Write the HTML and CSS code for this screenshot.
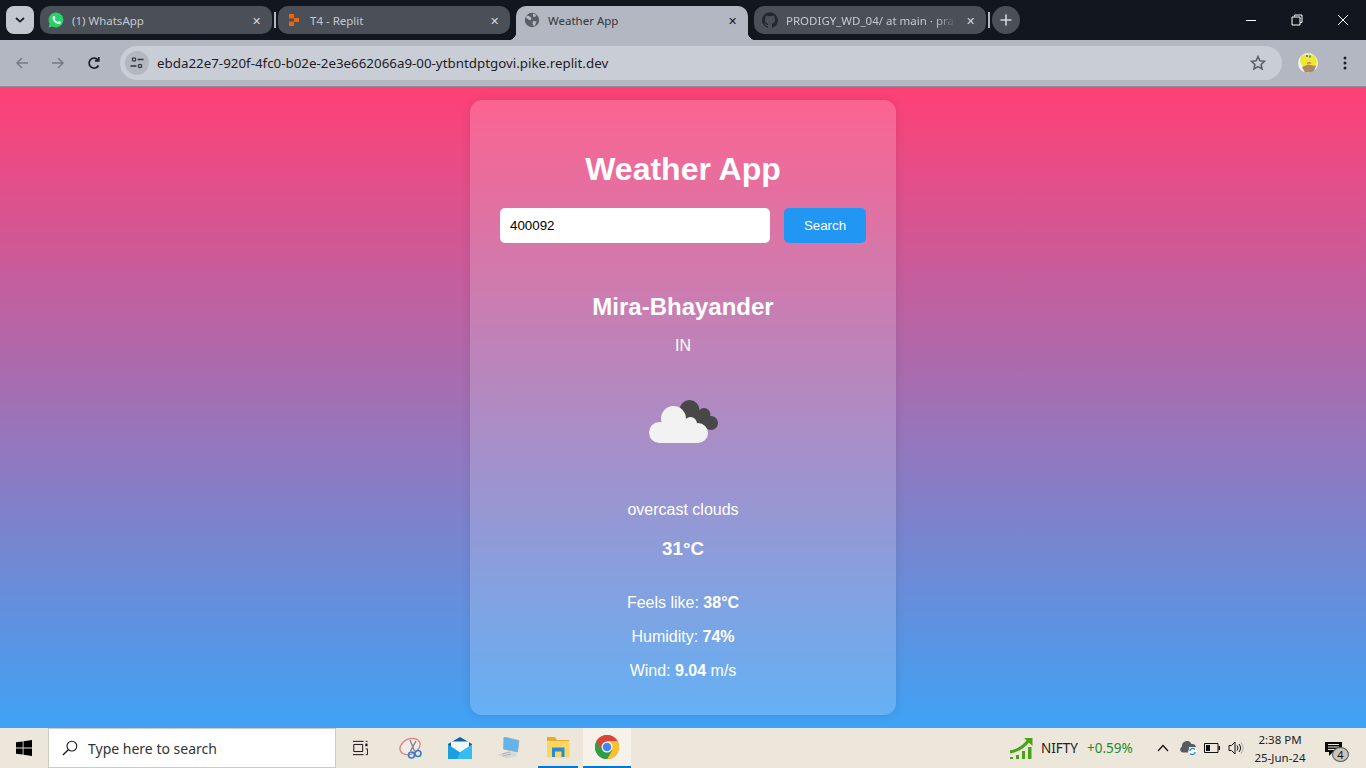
FILE: index.html
```html
<!DOCTYPE html>
<html lang="en">
<head>
  <meta charset="UTF-8">
  <meta name="viewport" content="width=device-width, initial-scale=1.0">
  <title>Weather App</title>
  <link rel="stylesheet" href="styles.css">
</head>
<body>
  <!-- browser tabs -->
  <div class="tabstrip">
    <div class="tab-menu">
      <svg width="10" height="6" viewBox="0 0 10 6"><path d="M1 1l4 3.6L9 1" fill="none" stroke="#1b1e25" stroke-width="1.8"/></svg>
    </div>
    <div class="tab">
      <svg class="favicon" width="16" height="16" viewBox="0 0 16 16"><path d="M8 .4a7.5 7.5 0 0 0-6.4 11.3L.5 15.6l4-1A7.5 7.5 0 1 0 8 .4z" fill="#25d366"/><path d="M5.6 3.9c-.9.5-1.4 1.600-1 2.900.7 2.400 2.900 4.500 5.300 5.200 1.300.3 2.400-.2 2.800-1.100.2-.5.200-.9.100-1l-1.900-.9-.9 1.100c-1.500-.5-2.700-1.700-3.300-3.200l.7-.9-.8-2z" fill="#fff"/></svg>
      <span class="tab-title">(1) WhatsApp</span>
      <span class="tab-close">✕</span>
    </div>
    <div class="tab-sep"></div>
    <div class="tab">
      <svg class="favicon" width="16" height="16" viewBox="0 0 16 16"><path d="M3 2h5v4.500H3zM8 6h5v4H8zM3 9.500h5V14H3z" fill="#f26207"/></svg>
      <span class="tab-title">T4 - Replit</span>
      <span class="tab-close">✕</span>
    </div>
    <div class="tab tab-active">
      <svg class="favicon" width="16" height="16" viewBox="0 0 16 16"><circle cx="8" cy="8" r="7.200" fill="#5a5e66"/><path d="M3 3.500l3 1 1.500 2-1 1.800-2-.5-2.700-2.500zM9 1.500l3.500 1.500-1.500 2-2-.5zM9 9l3.500.5-1.500 4-1.500.5-1-2.500z" fill="#b3b7c2"/></svg>
      <span class="tab-title">Weather App</span>
      <span class="tab-close">✕</span>
    </div>
    <div class="tab tab-last">
      <svg class="favicon" width="16" height="16" viewBox="0 0 16 16"><path d="M8 .2a8 8 0 0 0-2.500 15.600c.4.100.5-.2.500-.4v-1.400c-2.200.5-2.700-1-2.700-1-.4-.9-.9-1.200-.9-1.200-.7-.5.100-.5.100-.5.800.1 1.200.8 1.200.8.700 1.200 1.900.9 2.300.7.100-.5.300-.9.500-1.100-1.800-.2-3.600-.9-3.600-4 0-.9.300-1.600.8-2.100-.1-.2-.4-1 .1-2.100 0 0 .7-.2 2.200.8a7.600 7.600 0 0 1 4 0c1.500-1 2.200-.8 2.200-.8.400 1.100.200 1.900.100 2.100.5.600.8 1.300.8 2.100 0 3.100-1.900 3.700-3.700 3.900.3.300.6.800.6 1.500v2.200c0 .2.100.5.600.4A8 8 0 0 0 8 .2z" fill="#24272e"/></svg>
      <span class="tab-title tab-title-fade">PRODIGY_WD_04/ at main · pra</span>
      <span class="tab-close">✕</span>
    </div>
    <div class="tab-sep tab-sep-last"></div>
    <div class="tab-new">
      <svg width="12" height="12" viewBox="0 0 12 12"><path d="M6 .5v11M.5 6h11" stroke="#d3d6dc" stroke-width="1.600"/></svg>
    </div>
    <div class="win-controls">
      <svg width="12" height="12" viewBox="0 0 12 12"><path d="M1 6.500h10" stroke="#fff"/></svg>
      <svg width="12" height="12" viewBox="0 0 12 12"><path d="M3.500 2.500V1h7.500v7.500H9M1 3h8v8H1z" fill="none" stroke="#fff"/></svg>
      <svg width="12" height="12" viewBox="0 0 12 12"><path d="M1 1l10 10M11 1L1 11" stroke="#fff"/></svg>
    </div>
  </div>

  <!-- address bar -->
  <div class="toolbar">
    <svg class="nav-icon" width="14" height="14" viewBox="0 0 14 14"><path d="M13 7H2M7 2L2 7l5 5" fill="none" stroke="#777b84" stroke-width="1.500"/></svg>
    <svg class="nav-icon" width="14" height="14" viewBox="0 0 14 14"><path d="M1 7h11M7 2l5 5-5 5" fill="none" stroke="#777b84" stroke-width="1.500"/></svg>
    <svg class="nav-icon" width="14" height="14" viewBox="0 0 14 14"><path d="M11.500 9.500A5 5 0 1 1 11 4M11.800 1v3.800H8" fill="none" stroke="#1e2025" stroke-width="1.700"/></svg>
    <div class="omnibox">
      <div class="site-info">
        <svg width="14" height="12" viewBox="0 0 14 12"><circle cx="4" cy="2.500" r="1.700" fill="none" stroke="#33363c" stroke-width="1.200"/><path d="M7.500 2.500h6M.5 9h6" stroke="#33363c" stroke-width="1.400"/><circle cx="10" cy="9" r="1.700" fill="none" stroke="#33363c" stroke-width="1.200"/></svg>
      </div>
      <span class="url">ebda22e7-920f-4fc0-b02e-2e3e662066a9-00-ytbntdptgovi.pike.replit.dev</span>
      <svg class="star" width="16" height="16" viewBox="0 0 16 16"><path d="M8 1.500l1.900 4.300 4.600.5-3.400 3.100 1 4.600L8 11.700l-4.100 2.300 1-4.600L1.500 6.300l4.600-.5z" fill="none" stroke="#5a5d64" stroke-width="1.500"/></svg>
    </div>
    <svg class="avatar" width="20" height="20" viewBox="0 0 20 20"><circle cx="10" cy="10" r="10" fill="#f3f1e6"/><path d="M3 3.500C6 .5 14 0 17.500 4c1.500 3 1.500 7 .5 10l-14-1C2 10 2 6 3 3.500z" fill="#ecea2a"/><path d="M4 14l6-2.500 8 1.500-2 5-3 1.500H7z" fill="#a98a66"/><path d="M9 9.500h4v1H9z" fill="#d8369c"/><path d="M8 2h2v2H8zM11 2.500h2v2h-2z" fill="#6f79b8"/></svg>
    <svg class="kebab" width="4" height="14" viewBox="0 0 4 14"><circle cx="2" cy="2" r="1.500" fill="#1e2025"/><circle cx="2" cy="7" r="1.500" fill="#1e2025"/><circle cx="2" cy="12" r="1.500" fill="#1e2025"/></svg>
  </div>

  <!-- weather page -->
  <main class="page">
    <section class="card">
      <h1>Weather App</h1>
      <form class="search-form">
        <input type="text" class="city-input" value="400092">
        <button type="button" class="search-btn">Search</button>
      </form>
      <h2 class="city">Mira-Bhayander</h2>
      <p class="country">IN</p>
      <svg class="weather-icon" width="100" height="100" viewBox="0 0 100 100">
        <g fill="#484848">
          <circle cx="56.500" cy="38" r="10"/>
          <circle cx="71" cy="42.500" r="6.500"/>
          <circle cx="78" cy="51" r="7"/>
          <path d="M50 40h24v18H50z"/>
        </g>
        <g fill="#f2f2f2">
          <circle cx="40.500" cy="46.500" r="12.500"/>
          <circle cx="26.500" cy="60.500" r="10.500"/>
          <circle cx="65" cy="61" r="10"/>
          <circle cx="57.500" cy="51.500" r="6.500"/>
          <path d="M26 52h38v19H26z"/>
        </g>
      </svg>
      <p class="desc">overcast clouds</p>
      <p class="temp">31°C</p>
      <p class="detail detail-first">Feels like: <b>38°C</b></p>
      <p class="detail">Humidity: <b>74%</b></p>
      <p class="detail">Wind: <b>9.04</b> m/s</p>
    </section>
  </main>

  <!-- windows taskbar -->
  <footer class="taskbar">
    <div class="start">
      <svg width="16" height="16" viewBox="0 0 16 16"><path d="M0 2.300l6.700-.9v6.200H0zM7.500 1.300L16 0v7.600H7.500zM0 8.400h6.700v6.200L0 13.700zM7.500 8.400H16V16l-8.500-1.200z" fill="#000"/></svg>
    </div>
    <div class="task-search">
      <svg width="16" height="16" viewBox="0 0 17 17"><circle cx="10.500" cy="6.500" r="5.200" fill="none" stroke="#1a1a1a" stroke-width="1.200"/><path d="M6.700 10.300L1 16" stroke="#1a1a1a" stroke-width="1.400"/></svg>
      <span>Type here to search</span>
    </div>
    <div class="task-btn task-view">
      <svg width="16" height="16" viewBox="0 0 18 16"><path d="M1 .5h12M1 15.500h12M2 4h10v8H2z" fill="none" stroke="#111" stroke-width="1.100"/><path d="M15 3h2.500v3H15z" fill="#111"/><path d="M15.500 .5h2M15.500 9h2v6.500h-2" fill="none" stroke="#111"/></svg>
    </div>
    <div class="task-apps">
      <div class="task-btn">
        <svg width="24" height="24" viewBox="0 0 24 24"><ellipse cx="11" cy="10.500" rx="10.500" ry="7.500" transform="rotate(-25 11 10.500)" fill="#f3ece6" stroke="#e77f7c" stroke-width="1.300"/><path d="M11 4l4.500 11M17 5l-5.500 10" stroke="#77797d" stroke-width="1.200"/><circle cx="12.500" cy="19" r="3" fill="none" stroke="#2e7fd6" stroke-width="1.600"/><circle cx="19" cy="17.500" r="3" fill="none" stroke="#2e7fd6" stroke-width="1.600"/></svg>
      </div>
      <div class="task-btn">
        <svg width="24" height="22" viewBox="0 0 24 22"><path d="M0 7l12-7 12 7v15H0z" fill="#0b62ad"/><path d="M3 4.500h18V11l-9 5-9-5z" fill="#eef7fc"/><path d="M0 7.500l12 8 12-8V22H0z" fill="#1a9fe0"/><path d="M24 7.500V22H9l3-6.500z" fill="#35bdf0"/></svg>
      </div>
      <div class="task-btn">
        <svg width="24" height="22" viewBox="0 0 24 22"><path d="M7 0l15 3.500-1.500 11.500L6.500 12z" fill="#63b4ea" stroke="#9aa5ae" stroke-width=".7"/><path d="M11 14.500l8 1.500 1 3-10.500 2.500-9-3.500z" fill="#d6d8d9"/><path d="M5 17l8-2M6 19l8-2" stroke="#b0b3b5"/></svg>
      </div>
      <div class="task-btn task-open task-folder">
        <svg width="24" height="22" viewBox="0 0 24 22"><path d="M1 1h8l2 3h12v6H1z" fill="#eda92a"/><path d="M1 5h22.500v16.500H1z" fill="#fdd663"/><path d="M6 11.500h12.500V21h-3v-5.500H9V21H6z" fill="#2b8bd2"/></svg>
      </div>
      <div class="task-btn task-open task-current">
        <svg width="24" height="24" viewBox="0 0 24 24"><circle cx="12" cy="12" r="12" fill="#db4437"/><path d="M12 24A12 12 0 0 0 22.400 6H12l5.200 9z" fill="#fbc02d"/><path d="M1.600 6A12 12 0 0 0 12 24l5.200-9H6.800z" fill="#2e9e48"/><path d="M12 6h10.400a12 12 0 0 0-20.800 0l5.200 9A6 6 0 0 1 12 6z" fill="#db4437"/><circle cx="12" cy="12" r="5.500" fill="#fff"/><circle cx="12" cy="12" r="4.300" fill="#4285f4"/></svg>
      </div>
    </div>
    <div class="tray">
      <div class="stock">
        <svg width="24" height="23" viewBox="0 0 24 23"><path d="M1 15C7 14 14 11 20 3" fill="none" stroke="#4aa317" stroke-width="3"/><path d="M15 1h8.500v8z" fill="#4aa317"/><path d="M1 20h3v2H1zM7 18h3v4H7zM13 14h3v8h-3zM19 10h3.500v12H19z" fill="#4aa317"/></svg>
        <span class="stock-name">NIFTY</span>
        <span class="stock-change">+0.59%</span>
      </div>
      <svg class="tray-chevron" width="12" height="8" viewBox="0 0 12 8"><path d="M1 7l5-5.500L11 7" fill="none" stroke="#111" stroke-width="1.200"/></svg>
      <svg class="tray-cloud" width="18" height="15" viewBox="0 0 18 15"><path d="M2.500 11.500A3 3 0 0 1 2 5.800 5 5 0 0 1 11.500 3 4 4 0 0 1 16 6H9v5.500z" fill="#575b60"/><circle cx="12.500" cy="10.500" r="4.300" fill="#fff"/><path d="M9.800 10a2.800 2.800 0 0 1 5-1.500M15.200 11a2.800 2.800 0 0 1-5 1.500" fill="none" stroke="#1685dc" stroke-width="1.300"/></svg>
      <svg class="tray-battery" width="16" height="10" viewBox="0 0 16 10"><path d="M.5 .5h13.500v9H.5z" fill="none" stroke="#111"/><path d="M2 2h4v6H2z" fill="#111"/><path d="M14.500 3H16v4h-1.500z" fill="#111"/></svg>
      <svg class="tray-volume" width="16" height="14" viewBox="0 0 16 14"><path d="M1 4.500h2.500L7 1v12L3.500 9.500H1z" fill="none" stroke="#111"/><path d="M9 4.500a4 4 0 0 1 0 5M11 3a6.500 6.500 0 0 1 0 8" fill="none" stroke="#111"/><path d="M13 1.500a9 9 0 0 1 0 11" fill="none" stroke="#aaa"/></svg>
      <div class="clock">
        <span>2:38 PM</span>
        <span>25-Jun-24</span>
      </div>
      <div class="notify">
        <svg width="17" height="14" viewBox="0 0 17 14"><path d="M0 0h17v10H8l-4 4v-4H0z" fill="#0c0c0c"/><path d="M3 2.500h11M3 5h11M3 7.500h7" stroke="#ede6da"/></svg>
        <span class="notify-badge">4</span>
      </div>
    </div>
  </footer>
</body>
</html>
```

FILE: styles.css
```css
* {
  box-sizing: border-box;
}

html, body {
  margin: 0;
  height: 768px;
  overflow: hidden;
}

body {
  display: flex;
  flex-direction: column;
  font-family: "Liberation Sans", Arial, sans-serif;
}

/* tab strip */
.tabstrip {
  display: flex;
  align-items: flex-start;
  height: 40px;
  padding: 6px 0 0 6px;
  background-color: #12161f;
  font-family: "Noto Sans", sans-serif;
  font-size: 11.5px;
}

.tab-menu {
  display: flex;
  align-items: center;
  justify-content: center;
  width: 28px;
  height: 28px;
  margin-right: 6px;
  border-radius: 8px;
  background-color: #c3c7d0;
}

.tab {
  display: flex;
  align-items: center;
  width: 232px;
  height: 28px;
  padding: 0 11px 0 8px;
  border-radius: 10px;
  background-color: #4b4f58;
  color: #c6c8cd;
}

.favicon {
  flex: none;
  margin-right: 8px;
}

.tab-title {
  flex: 1;
  overflow: hidden;
  white-space: nowrap;
}

.tab-title-fade {
  -webkit-mask-image: linear-gradient(to right, #000 88%, transparent);
  mask-image: linear-gradient(to right, #000 88%, transparent);
}

.tab-close {
  margin-left: 10px;
  font-size: 11px;
  color: #d3d6dc;
}

.tab-sep {
  width: 2px;
  height: 16px;
  margin: 6px 2px 0;
  background-color: #b3b7c2;
}

.tab-active {
  position: relative;
  height: 34px;
  margin: 0 6px;
  padding-bottom: 6px;
  border-radius: 10px 10px 0 0;
  background-color: #b3b7c2;
  color: #33363c;
}

.tab-active .tab-close {
  color: #17191e;
}

.tab-active::before,
.tab-active::after {
  content: "";
  position: absolute;
  bottom: 0;
  width: 8px;
  height: 8px;
}

.tab-active::before {
  left: -8px;
  background: radial-gradient(circle at 0 0, transparent 8px, #b3b7c2 8.5px);
}

.tab-active::after {
  right: -8px;
  background: radial-gradient(circle at 100% 0, transparent 8px, #b3b7c2 8.5px);
}

.tab-last {
  width: 232px;
}

.tab-sep-last {
  margin: 6px 2px 0;
}

.tab-new {
  display: flex;
  align-items: center;
  justify-content: center;
  width: 28px;
  height: 28px;
  border-radius: 50%;
  background-color: #4b4f58;
}

.win-controls {
  display: flex;
  gap: 34px;
  margin-left: auto;
  padding: 8px 17px 0 0;
}

/* address bar */
.toolbar {
  display: flex;
  align-items: center;
  height: 47px;
  padding: 0 0 1px 15px;
  border-bottom: 1px solid #8f9299;
  background-color: #b3b7c2;
}

.nav-icon {
  flex: none;
  margin-right: 22px;
}

.omnibox {
  display: flex;
  align-items: center;
  width: 1162px;
  height: 34px;
  margin-left: -3px;
  padding: 0 16px 0 5px;
  border-radius: 17px;
  background-color: #c9ced6;
  font-family: "Noto Sans", sans-serif;
}

.site-info {
  display: flex;
  align-items: center;
  justify-content: center;
  width: 24px;
  height: 24px;
  margin-right: 8px;
  border-radius: 50%;
  background-color: #b3b7c2;
}

.url {
  flex: 1;
  font-size: 13.35px;
  color: #1e2025;
}

.avatar {
  flex: none;
  margin-left: 16px;
}

.kebab {
  flex: none;
  margin-left: 25px;
}

/* weather page */
.page {
  flex: 1;
  display: flex;
  align-items: center;
  justify-content: center;
  background: linear-gradient(to bottom, #ff4076, #3fa2f5);
}

.card {
  width: 426px;
  height: 615px;
  padding: 30px;
  border-radius: 12px;
  background-color: rgba(255, 255, 255, 0.18);
  box-shadow: 0 0 10px rgba(0, 0, 0, 0.1);
  color: #fff;
  text-align: center;
}

.card h1 {
  margin: 21px 0 20px;
  font-size: 32px;
  line-height: 37px;
}

.search-form {
  display: flex;
  gap: 14px;
  margin-bottom: 50px;
}

.city-input {
  flex: 1;
  height: 35px;
  padding: 0 10px;
  border: 0;
  border-radius: 5px;
  background-color: #fff;
  font-family: "Liberation Sans", Arial, sans-serif;
  font-size: 13.33px;
  color: #000;
}

.search-btn {
  width: 82px;
  height: 35px;
  padding: 0 0 1px;
  border: 0;
  border-radius: 5px;
  background-color: #2196f3;
  font-family: "Liberation Sans", Arial, sans-serif;
  font-size: 13.33px;
  color: #fff;
}

.city {
  margin: 0;
  font-size: 24px;
  line-height: 28px;
}

.country {
  margin: 16px 0 0;
  font-size: 16px;
  line-height: 18px;
}

.weather-icon {
  display: block;
  margin: 17px auto 0;
}

.desc {
  margin: 29px 0 0;
  font-size: 16px;
  line-height: 18px;
}

.temp {
  margin: 19px 0 0;
  font-size: 18.72px;
  font-weight: bold;
  line-height: 21px;
}

.detail {
  margin: 16px 0 0;
  font-size: 16px;
  line-height: 18px;
}

.detail-first {
  margin-top: 35px;
}

/* taskbar */
.taskbar {
  display: flex;
  align-items: stretch;
  height: 40px;
  background-color: #ede6da;
  font-family: "Noto Sans", sans-serif;
}

.start {
  display: flex;
  align-items: center;
  justify-content: center;
  width: 48px;
}

.task-search {
  display: flex;
  align-items: center;
  gap: 10px;
  width: 288px;
  padding-left: 13px;
  border: 1px solid #cfcbc4;
  background-color: #fff;
  font-size: 14px;
  color: #333;
}

.task-btn {
  display: flex;
  align-items: center;
  justify-content: center;
  width: 48px;
}

.task-view {
  margin-right: 3px;
}

.task-apps {
  display: flex;
  gap: 1px;
}

.task-open {
  border-bottom: 2px solid #0078d4;
}

.task-folder {
  width: 40px;
  margin: 0 4px;
}

.task-current {
  background-color: #f6f2ea;
}

.tray {
  display: flex;
  align-items: center;
  margin-left: auto;
  padding-right: 24px;
}

.stock {
  display: flex;
  align-items: center;
  width: 144px;
  font-size: 13.5px;
}

.stock-name {
  margin-left: 8px;
  color: #222;
}

.stock-change {
  margin-left: 9px;
  color: #1d8a33;
}

.tray-chevron {
  margin-left: 4px;
}

.tray-cloud {
  margin-left: 11px;
}

.tray-battery {
  margin-left: 6px;
}

.tray-volume {
  margin-left: 8px;
}

.clock {
  display: flex;
  flex-direction: column;
  align-items: center;
  gap: 3px;
  width: 62px;
  margin-left: 5px;
  font-size: 11.5px;
  line-height: 15px;
  color: #222;
}

.notify {
  position: relative;
  margin: -4px 0 0 14px;
  height: 14px;
}

.notify-badge {
  position: absolute;
  top: 8px;
  left: 7px;
  width: 17px;
  height: 15px;
  border: 1px solid #555;
  border-radius: 50%;
  background-color: #c9c5be;
  font-size: 11px;
  line-height: 13px;
  text-align: center;
  color: #111;
}
```
